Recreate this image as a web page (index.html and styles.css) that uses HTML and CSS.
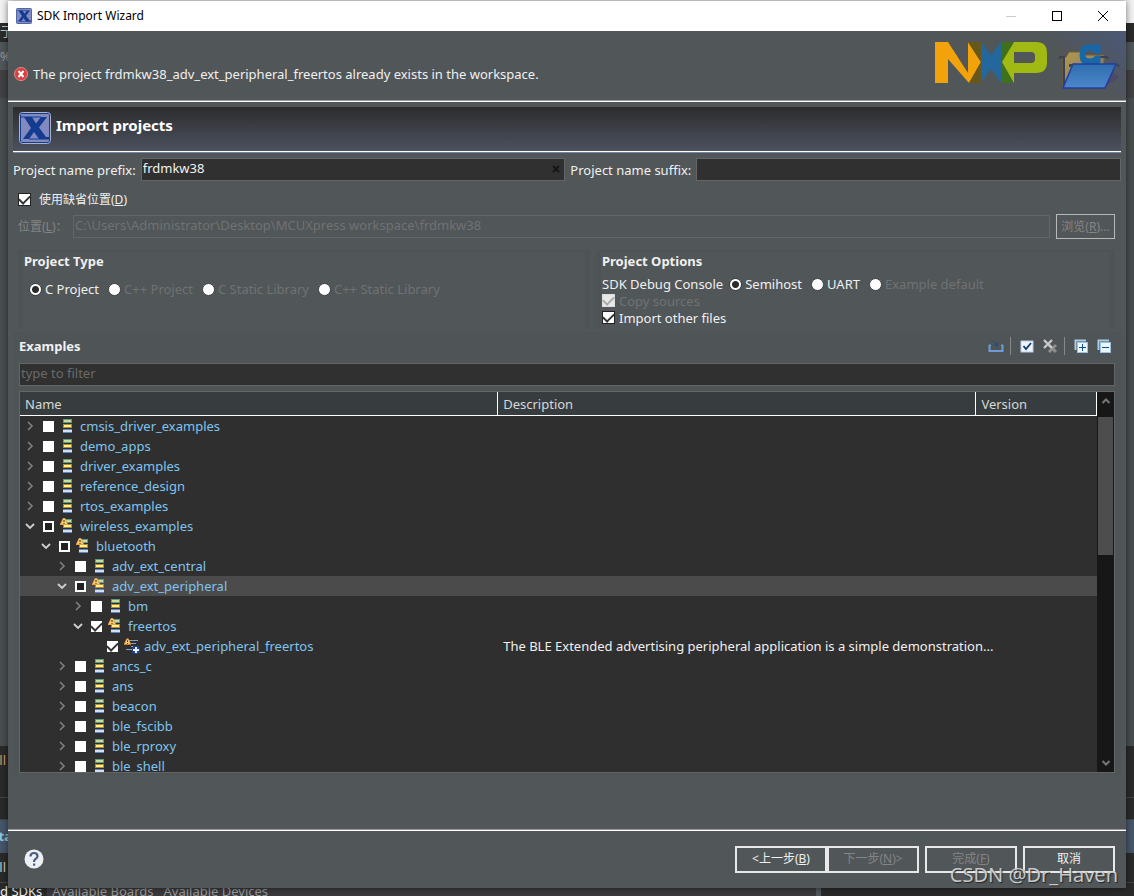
FILE: index.html
```html
<!DOCTYPE html>
<html lang="zh-CN">
<head>
<meta charset="utf-8">
<title>SDK Import Wizard</title>
<link rel="stylesheet" href="styles.css">
</head>
<body>
<svg class="defs" aria-hidden="true">
  <symbol id="x-logo" viewBox="0 0 32 32">
    <rect x="1" y="1" width="30" height="30" rx="2" fill="#8288c0" stroke="#173c8c" stroke-width="2"/>
    <rect x="0.500" y="0.500" width="31" height="31" rx="3" fill="none" stroke="#a9b3cd"/>
    <path d="M2 5h20M10 27h20" stroke="#173c8c" stroke-width="1"/>
    <path d="M5 5H13L17 11.500L22 5H28L20 15.500L27 25H30V27H20L15 20L10 27H4L12 16Z" fill="#133b8f"/>
  </symbol>
  <symbol id="right" viewBox="0 0 12 12"><path d="M4 2l4 4-4 4" fill="none" stroke="#808080" stroke-width="1.600"/></symbol>
  <symbol id="down" viewBox="0 0 12 12"><path d="M2 4l4 4 4-4" fill="none" stroke="#d0d0d0" stroke-width="1.800"/></symbol>
  <symbol id="stack" viewBox="0 0 16 16">
    <rect x="3" y="1" width="9" height="4" fill="#5d9b85"/><rect x="4" y="2" width="7" height="2" fill="#c9dc9a"/>
    <rect x="3" y="6" width="9" height="4" fill="#b88a1d"/><rect x="4" y="7" width="7" height="2" fill="#fff0a0"/>
    <rect x="3" y="11" width="9" height="4" fill="#5f83bd"/><rect x="3" y="12" width="9" height="2" fill="#d5def0"/>
  </symbol>
  <symbol id="alert" viewBox="0 0 8 8"><path d="M3 0H5L8 6V7H0V6Z" fill="#e9a23b"/><path d="M3 1H5L7 6H1Z" fill="#f8c878"/><path d="M3.500 2h1v2h-1zM3.500 5h1v1h-1z" fill="#4b2c05"/></symbol>
  <symbol id="stack-warn" viewBox="0 0 16 16"><use href="#stack" width="16" height="16"/><use href="#alert" width="8" height="8"/></symbol>
  <symbol id="leaf-warn" viewBox="0 0 16 16">
    <path d="M5 2.500h9M7 5.500h5M7 8.500h6M2 11.500h7" stroke="#8d9dc6"/>
    <use href="#alert" width="7" height="8"/>
    <path d="M9 8h6v2h1v5h-2v1h-4v-1H8v-5h1z" fill="#24448f"/><path d="M11 9h2v2h2v2h-2v2h-2v-2H9v-2h2z" fill="#e6efff"/>
  </symbol>
</svg>

<div class="backdrop" aria-hidden="true">
  <div class="strip menu">亍</div>
  <div class="strip tools">%</div>
  <div class="strip tabs"></div>
  <div class="strip editor"></div>
  <div class="strip console">all</div>
  <div class="strip dark"></div>
  <div class="strip chosen">sta</div>
  <div class="strip dark">all</div>
  <div class="strip views"><span class="view on">d SDKs</span><span class="view">Available Boards</span><span class="view">Available Devices</span><span class="split"></span></div>
</div>

<main class="dialog">
  <header class="titlebar">
    <svg class="i16"><use href="#x-logo"/></svg>
    <h1>SDK Import Wizard</h1>
    <button class="win" aria-label="Minimize" disabled><svg class="i12" viewBox="0 0 12 12"><path d="M1 6.500h10" stroke="#ccc"/></svg></button>
    <button class="win" aria-label="Maximize"><svg class="i12" viewBox="0 0 12 12"><rect x="1.500" y="1.500" width="9" height="9" fill="none" stroke="#000"/></svg></button>
    <button class="win" aria-label="Close"><svg class="i12" viewBox="0 0 12 12"><path d="M1 1l10 10M11 1L1 11" stroke="#000"/></svg></button>
  </header>

  <section class="banner">
    <p class="message">
      <svg class="i14" viewBox="0 0 14 14"><circle cx="7" cy="7" r="6.500" fill="#d8403f" stroke="#e98a86"/><path d="M4.500 4l5 6M9.500 4l-5 6" stroke="#fff" stroke-width="2"/></svg>
      The project frdmkw38_adv_ext_peripheral_freertos already exists in the workspace.
    </p>
    <svg class="nxp" viewBox="0 0 112 41" role="img" aria-label="NXP">
      <path d="M0 0H13L33 31V0L46 20L34 41L13 17V41H0Z" fill="#f2a30b"/>
      <path d="M33 0H46V20ZM46 20V41H34Z" fill="#66581a"/>
      <path d="M46 0L56 13L66 0V41L56 27L46 41Z" fill="#24679c"/>
      <path d="M66 0H79L67 20L79 41H66Z" fill="#3f701b"/>
      <path fill-rule="evenodd" d="M79 0H101Q112 0 112 11V20Q112 31 101 31H79V41L67 20ZM79 10V21H96Q100 21 100 17V14Q100 10 96 10Z" fill="#a0b913"/>
    </svg>
    <svg class="folder" viewBox="0 0 75 69" aria-hidden="true">
      <defs>
        <linearGradient id="glow" x1="0" y1="1" x2="1" y2="0"><stop offset="0.400" stop-color="#4b5877" stop-opacity="0"/><stop offset="1" stop-color="#4b5877"/></linearGradient>
        <linearGradient id="blue" x1="0" y1="0" x2="0" y2="1"><stop offset="0" stop-color="#2f6fae"/><stop offset="1" stop-color="#4c86cb"/></linearGradient>
        <linearGradient id="sand" x1="0" y1="0" x2="1" y2="1"><stop offset="0" stop-color="#b39a52"/><stop offset="1" stop-color="#78705c"/></linearGradient>
      </defs>
      <rect width="75" height="66" fill="url(#glow)"/>
      <path d="M48 57L60 40L68 46Q58 54 48 57Z" fill="#4d4966"/>
      <path d="M12 56V26H15L18 21H31L33 24H53V56Z" fill="url(#sand)" stroke="#725f2c"/>
      <path d="M9 28V26H13V56M48 26H56L57 28" fill="none" stroke="#3d4052" stroke-width="2"/>
      <path d="M50 15H52V21H49Q47 18 43 18Q37 18 37 24Q37 29 43 29Q47 29 49 26H52V31Q47 33 42 33Q34 33 34 24Q34 15 42 15Z" transform="translate(-4)" fill="#1767a9" stroke="#1767a9" stroke-width="3"/>
      <path d="M22 33H65L54 57H12Z" fill="url(#blue)" stroke="#223ea4" stroke-width="1.500"/>
      <path d="M19 36V34H22M64 34H67L68 36" fill="none" stroke="#3b4560" stroke-width="2"/>
    </svg>
  </section>

  <section class="form">
    <div class="form-title"><svg class="i32"><use href="#x-logo"/></svg><h2>Import projects</h2></div>

    <div class="names">
      <label for="prefix">Project name prefix:</label>
      <div class="field"><input id="prefix" type="text" value="frdmkw38"><button class="clear" aria-label="Clear"><svg class="i8" viewBox="0 0 8 8"><path d="M1 1l6 6M7 1L1 7" stroke="#151515" stroke-width="1.800"/></svg></button></div>
      <label for="suffix">Project name suffix:</label>
      <div class="field"><input id="suffix" type="text"></div>
    </div>

    <div class="default-row"><input type="checkbox" class="check" id="default" checked><label for="default">使用缺省位置(<u>D</u>)</label></div>

    <div class="location">
      <label for="loc">位置(<u>L</u>)：</label>
      <input id="loc" type="text" disabled value="C:\Users\Administrator\Desktop\MCUXpress workspace\frdmkw38">
      <button class="browse" disabled>浏览(<u>R</u>)...</button>
    </div>

    <div class="groups">
      <fieldset class="group kind">
        <h3>Project Type</h3>
        <div class="options spaced">
          <label><input type="radio" name="type" checked>C Project</label>
          <label class="off"><input type="radio" name="type" disabled>C++ Project</label>
          <label class="off"><input type="radio" name="type" disabled>C Static Library</label>
          <label class="off"><input type="radio" name="type" disabled>C++ Static Library</label>
        </div>
      </fieldset>
      <fieldset class="group opts">
        <h3>Project Options</h3>
        <div class="options">
          <span>SDK Debug Console</span>
          <label><input type="radio" name="console" checked>Semihost</label>
          <label><input type="radio" name="console">UART</label>
          <label class="off"><input type="radio" name="console" disabled>Example default</label>
        </div>
        <label class="line off"><input type="checkbox" class="check" checked disabled>Copy sources</label>
        <label class="line"><input type="checkbox" class="check" checked>Import other files</label>
      </fieldset>
    </div>

    <section class="examples">
      <div class="bar">
        <h3>Examples</h3>
        <button aria-label="Import archive"><svg class="i16" viewBox="0 0 16 16"><path d="M1 7.500h2M13 7.500h2M1.500 7v6h13V7" fill="none" stroke="#6e9bd8" stroke-width="2"/><path d="M3 1l5 5" stroke="#174f8c" stroke-dasharray="2 1"/><path d="M6 8h4V4z" fill="#174f8c"/></svg></button>
        <i></i>
        <button aria-label="Check all"><svg class="i16" viewBox="0 0 16 16"><rect x="2" y="3" width="12" height="11" fill="#eef5ff" stroke="#b9cbe6"/><path d="M4.500 8l2.500 3 5-6" fill="none" stroke="#173a66" stroke-width="1.800"/></svg></button>
        <button aria-label="Uncheck all"><svg class="i16" viewBox="0 0 16 16"><path d="M7 7l7 7M14 7l-7 7" stroke="#8e8e8e" stroke-width="3"/><path d="M2 2l8 8M10 2L2 10" stroke="#c9c9c9" stroke-width="2.400"/></svg></button>
        <i></i>
        <button aria-label="Expand all"><svg class="i16" viewBox="0 0 16 16"><path d="M2.500 12V2.500H13" fill="none" stroke="#a9cbe8" stroke-width="2"/><rect x="4.500" y="4.500" width="10" height="10" fill="#eaf6ff" stroke="#9bc0e2"/><path d="M6 9.500h7M9.500 6v7" stroke="#104a87"/></svg></button>
        <button aria-label="Collapse all"><svg class="i16" viewBox="0 0 16 16"><path d="M2.500 12V2.500H13" fill="none" stroke="#a9cbe8" stroke-width="2"/><rect x="4.500" y="4.500" width="10" height="10" fill="#eaf6ff" stroke="#9bc0e2"/><path d="M6 9.500h7" stroke="#104a87"/></svg></button>
      </div>
      <input class="filter" type="text" placeholder="type to filter" aria-label="Filter">
      <div class="tree">
        <div class="viewport">
          <table>
            <colgroup><col class="c-name"><col class="c-desc"><col class="c-ver"></colgroup>
            <thead><tr><th>Name</th><th>Description</th><th>Version</th></tr></thead>
            <tbody>
              <tr><td><div class="node l0"><button aria-label="Expand"><svg><use href="#right"/></svg></button><input type="checkbox" id="n1"><svg class="i16"><use href="#stack"/></svg><label for="n1">cmsis_driver_examples</label></div></td><td></td><td></td></tr>
              <tr><td><div class="node l0"><button aria-label="Expand"><svg><use href="#right"/></svg></button><input type="checkbox" id="n2"><svg class="i16"><use href="#stack"/></svg><label for="n2">demo_apps</label></div></td><td></td><td></td></tr>
              <tr><td><div class="node l0"><button aria-label="Expand"><svg><use href="#right"/></svg></button><input type="checkbox" id="n3"><svg class="i16"><use href="#stack"/></svg><label for="n3">driver_examples</label></div></td><td></td><td></td></tr>
              <tr><td><div class="node l0"><button aria-label="Expand"><svg><use href="#right"/></svg></button><input type="checkbox" id="n4"><svg class="i16"><use href="#stack"/></svg><label for="n4">reference_design</label></div></td><td></td><td></td></tr>
              <tr><td><div class="node l0"><button aria-label="Expand"><svg><use href="#right"/></svg></button><input type="checkbox" id="n5"><svg class="i16"><use href="#stack"/></svg><label for="n5">rtos_examples</label></div></td><td></td><td></td></tr>
              <tr><td><div class="node l0"><button aria-label="Collapse"><svg><use href="#down"/></svg></button><input type="checkbox" class="partial" id="n6"><svg class="i16"><use href="#stack-warn"/></svg><label for="n6">wireless_examples</label></div></td><td></td><td></td></tr>
              <tr><td><div class="node l1"><button aria-label="Collapse"><svg><use href="#down"/></svg></button><input type="checkbox" class="partial" id="n7"><svg class="i16"><use href="#stack-warn"/></svg><label for="n7">bluetooth</label></div></td><td></td><td></td></tr>
              <tr><td><div class="node l2"><button aria-label="Expand"><svg><use href="#right"/></svg></button><input type="checkbox" id="n8"><svg class="i16"><use href="#stack"/></svg><label for="n8">adv_ext_central</label></div></td><td></td><td></td></tr>
              <tr class="selected"><td><div class="node l2"><button aria-label="Collapse"><svg><use href="#down"/></svg></button><input type="checkbox" class="partial" id="n9"><svg class="i16"><use href="#stack-warn"/></svg><label for="n9">adv_ext_peripheral</label></div></td><td></td><td></td></tr>
              <tr><td><div class="node l3"><button aria-label="Expand"><svg><use href="#right"/></svg></button><input type="checkbox" id="n10"><svg class="i16"><use href="#stack"/></svg><label for="n10">bm</label></div></td><td></td><td></td></tr>
              <tr><td><div class="node l3"><button aria-label="Collapse"><svg><use href="#down"/></svg></button><input type="checkbox" checked id="n11"><svg class="i16"><use href="#stack-warn"/></svg><label for="n11">freertos</label></div></td><td></td><td></td></tr>
              <tr><td><div class="node l4 leaf"><input type="checkbox" checked id="n12"><svg class="i16"><use href="#leaf-warn"/></svg><label for="n12">adv_ext_peripheral_freertos</label></div></td><td>The BLE Extended advertising peripheral application is a simple demonstration...</td><td></td></tr>
              <tr><td><div class="node l2"><button aria-label="Expand"><svg><use href="#right"/></svg></button><input type="checkbox" id="n13"><svg class="i16"><use href="#stack"/></svg><label for="n13">ancs_c</label></div></td><td></td><td></td></tr>
              <tr><td><div class="node l2"><button aria-label="Expand"><svg><use href="#right"/></svg></button><input type="checkbox" id="n14"><svg class="i16"><use href="#stack"/></svg><label for="n14">ans</label></div></td><td></td><td></td></tr>
              <tr><td><div class="node l2"><button aria-label="Expand"><svg><use href="#right"/></svg></button><input type="checkbox" id="n15"><svg class="i16"><use href="#stack"/></svg><label for="n15">beacon</label></div></td><td></td><td></td></tr>
              <tr><td><div class="node l2"><button aria-label="Expand"><svg><use href="#right"/></svg></button><input type="checkbox" id="n16"><svg class="i16"><use href="#stack"/></svg><label for="n16">ble_fscibb</label></div></td><td></td><td></td></tr>
              <tr><td><div class="node l2"><button aria-label="Expand"><svg><use href="#right"/></svg></button><input type="checkbox" id="n17"><svg class="i16"><use href="#stack"/></svg><label for="n17">ble_rproxy</label></div></td><td></td><td></td></tr>
              <tr><td><div class="node l2"><button aria-label="Expand"><svg><use href="#right"/></svg></button><input type="checkbox" id="n18"><svg class="i16"><use href="#stack"/></svg><label for="n18">ble_shell</label></div></td><td></td><td></td></tr>
            </tbody>
          </table>
        </div>
        <div class="scroll">
          <button aria-label="Scroll up"><svg class="i10" viewBox="0 0 10 10"><path d="M1.500 7L5 3.500 8.500 7" fill="none" stroke="#777" stroke-width="2"/></svg></button>
          <div class="track"><div class="thumb"></div></div>
          <button aria-label="Scroll down"><svg class="i10" viewBox="0 0 10 10"><path d="M1.500 3L5 6.500 8.500 3" fill="none" stroke="#777" stroke-width="2"/></svg></button>
        </div>
      </div>
    </section>
  </section>

  <footer class="actions">
    <button class="help" aria-label="Help"><svg class="i20" viewBox="0 0 20 20"><circle cx="10" cy="10" r="9.500" fill="#eceff3"/><path d="M6.500 7.500Q6.500 4 10 4T13.500 7.200Q13.500 9 11.500 10Q10 11 10 13" fill="none" stroke="#4a5c80" stroke-width="2.200"/><rect x="9" y="14.500" width="2.200" height="2.200" fill="#4a5c80"/></svg></button>
    <div class="pair"><button class="act">&lt;上一步(<u>B</u>)</button><button class="act" disabled>下一步(<u>N</u>)&gt;</button></div>
    <button class="act" disabled>完成(<u>F</u>)</button>
    <button class="act">取消</button>
  </footer>
</main>
<div class="watermark">CSDN @Dr_Haven</div>
</body>
</html>
```
FILE: styles.css
```css
* { box-sizing: border-box; }
body {
  margin: 0;
  height: 100vh;
  overflow: hidden;
  position: relative;
  background: #2a2a2a;
  color: #f0f0f0;
  font: 13px/16px "Noto Sans", "Noto Sans CJK SC", sans-serif;
}
h1, h2, h3, p, fieldset { margin: 0; padding: 0; border: 0; font-size: 13px; }
button { padding: 0; border: 0; background: none; color: inherit; font: inherit; display: flex; align-items: center; justify-content: center; }
input { margin: 0; font: inherit; color: inherit; flex: none; }
svg { display: block; flex: none; }
.defs { position: absolute; width: 0; height: 0; }
.i8 { width: 8px; height: 8px; }
.i10 { width: 10px; height: 10px; }
.i12 { width: 12px; height: 12px; }
.i14 { width: 14px; height: 14px; }
.i16 { width: 16px; height: 16px; }
.i20 { width: 20px; height: 20px; }
.i32 { width: 32px; height: 32px; }

/* Workbench window behind the dialog */
.backdrop { position: absolute; inset: 0; padding-top: 23px; display: flex; flex-direction: column; background: #f2f2f2; }
.strip { flex: none; height: 28px; overflow: hidden; white-space: nowrap; color: #c8c8c8; }
.menu { height: 19px; background: #2a2a2a; direction: rtl; width: 100%; text-align: left; }
.tools { background: #50575a; color: #999; padding-top: 6px; }
.tabs { background: #424144; }
.editor { flex: 1; background: #484e50; }
.console { height: 52px; background: #2a2a2a; color: #d99a5c; padding-top: 6px; text-indent: -8px; border-bottom: 1px solid #444; }
.dark { background: #2a2a2a; text-indent: -8px; height: 22px; border-bottom: 1px solid #444; }
.chosen { height: 33px; background: #46566b; color: #8fc9d8; font-weight: bold; text-indent: -8px; padding-top: 8px; }
.chosen + .dark { height: 30px; padding-top: 6px; }
.views { height: 13px; display: flex; background: #3a3a3d; }
.view { padding: 0 5px; color: #999; }
.view.on { padding: 0 5px 0 0; background: #2a2a2a; color: #f0f0f0; }
.split { margin-left: auto; width: 28%; background: #2a2a2a; border-left: 5px solid #50575a; }

.dialog {
  position: relative;
  height: calc(100vh - 9px);
  margin: 1px 8px 8px;
  display: flex;
  flex-direction: column;
  background: #515658;
  box-shadow: 0 0 7px #0008;
}
.titlebar { height: 30px; flex: none; padding-left: 8px; display: flex; align-items: center; background: #fff; color: #000; }
.titlebar h1 { flex: 1; margin-left: 5px; font-size: 12px; font-weight: normal; }
.win { width: 46px; height: 30px; }

.banner { flex: none; height: 71px; padding-left: 6px; display: flex; border-bottom: 1px solid #fff; box-shadow: inset 0 -1px #999; }
.message { flex: 1; display: flex; align-items: center; gap: 5px; padding-top: 16px; }
.nxp { width: 112px; height: 41px; margin-top: 11px; }
.folder { width: 75px; height: 69px; margin-left: 4px; }

.form { flex: 1; min-height: 0; display: flex; flex-direction: column; padding: 5px 5px 54px; }
.form-title { flex: none; height: 46px; padding: 5px 6px; display: flex; gap: 5px; background: linear-gradient(#2d2d2d, #4c5260); border-bottom: 1px solid #7585a4; box-shadow: inset 0 -1px #fff; }
.form-title h2 { font-size: 15px; line-height: 26px; color: #fff; }

.names { display: flex; align-items: center; gap: 5px; margin-top: 5px; }
.field { position: relative; flex: 1; display: flex; }
.field input, .filter, .location input { height: 23px; padding: 0 1px 3px; border: 1px solid #656565; border-radius: 0; background: #303030; outline: 0; }
.field input { flex: 1; min-width: 0; }
.clear { position: absolute; right: 4px; top: 3px; width: 10px; height: 16px; }

.check { appearance: none; width: 13px; height: 13px; border: 1px solid #222; background: #fff; display: grid; place-items: center; }
.check:checked::after, .node input:checked::after { content: ""; width: 9px; height: 5px; border: solid #333; border-width: 0 0 2px 2px; transform: translateY(-1px) rotate(-45deg); }
.check:disabled { background: #e8e8e8; border-color: #ddd; }
.check:disabled::after { border-color: #aaa; }
.default-row { display: flex; align-items: center; gap: 8px; margin-top: 10px; padding-left: 5px; }
.default-row, .location, .act { font-size: 12px; }
.default-row label { line-height: 17px; }
.location { display: flex; align-items: center; gap: 6px; margin-top: 6px; padding: 0 6px 0 5px; color: #858585; }
.location label { width: 49px; white-space: nowrap; }
.location input { flex: 1; background: transparent; color: #707273; font-size: 13px; }
.browse { width: 59px; height: 25px; border: 1px solid #b8b8b8; }

.groups { display: grid; grid-template-columns: 572fr 519fr; gap: 6px; margin: 11px 6px 0 5px; }
.group { min-width: 0; height: 79px; border: solid #4e5355; border-width: 3px 5px 0; }
.group h3 { line-height: 16px; }
.kind { padding: 0 1px; }
.opts { padding: 0 1px; }
h3 { font-weight: bold; }
.options { display: flex; align-items: center; gap: 9px; margin-top: 7px; white-space: nowrap; }
.options.spaced { margin-top: 12px; padding-left: 5px; }
.options label, .line { display: flex; align-items: center; gap: 3px; }
.options span { margin-right: -3px; }
.line { height: 17px; gap: 4px; }
.off { color: #707273; }
.options input { appearance: none; width: 13px; height: 13px; border: 1px solid #3d3f40; border-radius: 50%; background: #fff; }
.options input:checked { background: radial-gradient(circle, #2b2b2b 3px, #fff 4px); }

.examples { flex: 1; min-height: 0; display: flex; flex-direction: column; margin-top: 3px; padding: 2px 6px; background: #4f5456; }
.bar { height: 24px; flex: none; display: flex; align-items: center; }
.bar h3 { flex: 1; }
.bar button { width: 23px; height: 22px; }
.bar i { width: 1px; height: 18px; margin: 0 4px 0 3px; background: #85898a; }
.filter { margin-top: 5px; width: 100%; }
.filter::placeholder { color: #6a6a6a; opacity: 1; }
.tree { flex: 1; min-height: 0; margin-top: 5px; display: flex; border: 1px solid #656565; background: #2f2f2f; }
.viewport { flex: 1; min-width: 0; overflow: hidden; }
table { width: 100%; border-collapse: separate; border-spacing: 0; table-layout: fixed; }
.c-name, .c-desc { width: 44.4%; }
th { height: 24px; padding: 0 5px; text-align: left; font-weight: normal; color: #d8d8d8; background: #373d3f; border-right: 1px solid #fff; border-bottom: 1px solid #fff; }
td { height: 20px; padding: 0 5px; white-space: nowrap; }
td:first-child { padding: 0; }
.node { display: flex; align-items: center; padding-left: 4px; color: #7fc4ee; }
.node button { width: 12px; height: 12px; margin-right: 7px; }
.node button svg { width: 12px; height: 12px; }
.node input { appearance: none; width: 11px; height: 11px; margin-right: 6px; background: #fff; display: grid; place-items: center; }
.node input.partial { background: #222; border: 2px solid #fff; }
.node label { margin-left: 4px; }
.l1 { padding-left: 20px; }
.l2 { padding-left: 36px; }
.l3 { padding-left: 52px; }
.l4.leaf { padding-left: 87px; }
.selected td { background: #4b4b4b; }
.scroll { width: 17px; display: flex; flex-direction: column; background: #171717; }
.scroll button { height: 18px; }
.track { flex: 1; padding: 7px 1px 0; }
.thumb { height: 41%; background: #4d4d4d; }

.actions { flex: none; height: 59px; padding: 0 11px 0 16px; display: flex; align-items: center; gap: 6px; border-top: 1px solid #999; box-shadow: inset 0 1px #fff; }
.help { margin-right: auto; }
.pair { display: flex; }
.act { width: 92px; height: 27px; border: 2px solid #e8e8e8; }
.act:disabled { color: #858585; }
.watermark { position: absolute; right: 16px; bottom: 8px; font-size: 20px; line-height: 26px; color: #d2d4d5; text-shadow: 1px 1px 1px #222; opacity: 0.9; pointer-events: none; }
```
